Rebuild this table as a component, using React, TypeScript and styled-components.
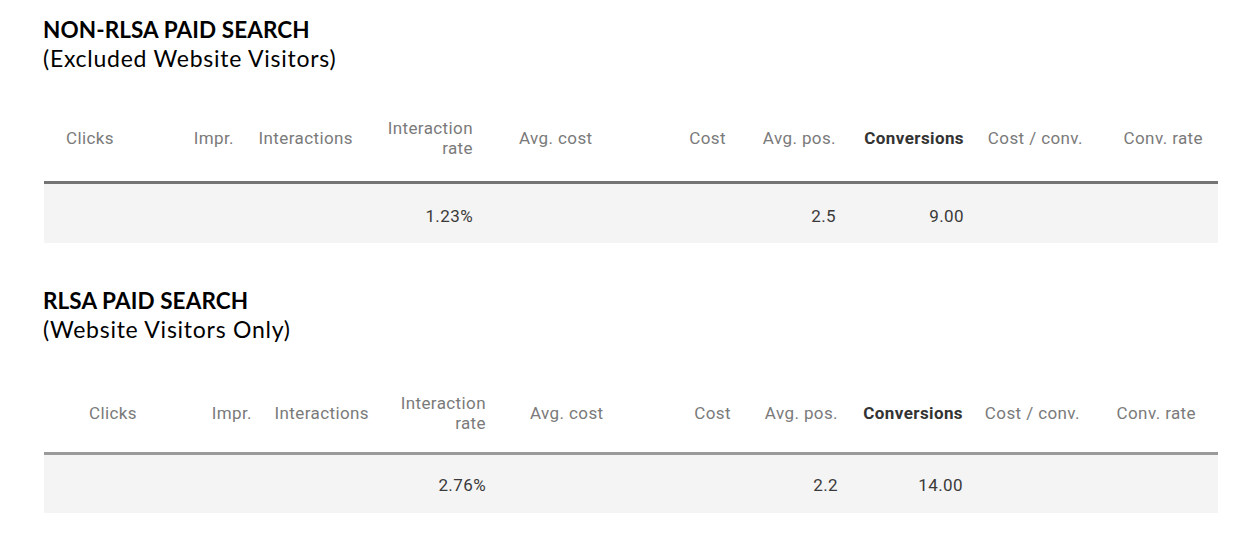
import React from "react";
import styled, { createGlobalStyle } from "styled-components";

const GlobalStyle = createGlobalStyle`
  html, body { margin: 0; padding: 0; background: #ffffff; }
  body { font-family: Roboto, "Liberation Sans", Arial, sans-serif; }
`;

const Page = styled.div`
  width: 1253px;
  box-sizing: border-box;
  padding: 15px 35px 0 43px;
  display: flex;
  flex-direction: column;
`;

const Section = styled.section<{ $gapTop: number; $gapTable: number }>`
  display: flex;
  flex-direction: column;
  margin-top: ${(p) => p.$gapTop}px;
  & > div[data-table] { margin-top: ${(p) => p.$gapTable}px; margin-left: 1px; }
`;

const Title = styled.h2`
  margin: 0;
  font-family: Lato, "Open Sans", "Liberation Sans", sans-serif;
  font-weight: 700;
  font-size: 22.5px;
  line-height: 29px;
  letter-spacing: 0.1px;
  color: #000;
`;

const Subtitle = styled.div`
  font-family: Lato, "Open Sans", "Liberation Sans", sans-serif;
  font-weight: 400;
  font-size: 23px;
  line-height: 29px;
  letter-spacing: 0.75px;
  color: #000;
`;

const Table = styled.div`
  width: 1174px;
  display: flex;
  flex-direction: column;
`;

const HeaderRow = styled.div<{ $cols: string; $height: number; $border: string; $lift: number }>`
  display: grid;
  grid-template-columns: ${(p) => p.$cols};
  height: ${(p) => p.$height}px;
  padding-bottom: ${(p) => p.$lift}px;
  align-items: center;
  border-bottom: ${(p) => p.$border};
`;

const DataRow = styled.div<{ $cols: string; $height: number; $shift: number }>`
  display: grid;
  grid-template-columns: ${(p) => p.$cols};
  height: ${(p) => p.$height}px;
  box-sizing: border-box;
  padding-top: ${(p) => p.$shift}px;
  align-items: center;
  background: #f4f4f4;
`;

const HeadCell = styled.div<{ $align: "left" | "right"; $padL: number; $padR: number; $strong?: boolean }>`
  text-align: ${(p) => p.$align};
  padding-left: ${(p) => p.$padL}px;
  padding-right: ${(p) => p.$padR}px;
  font-size: 17px;
  line-height: 20px;
  letter-spacing: 0.4px;
  white-space: nowrap;
  font-weight: ${(p) => (p.$strong ? 700 : 400)};
  color: ${(p) => (p.$strong ? "#333333" : "#7a7a7a")};
`;

const DataCell = styled.div<{ $padR: number }>`
  text-align: right;
  padding-right: ${(p) => p.$padR}px;
  font-size: 17px;
  line-height: 20px;
  letter-spacing: 0.4px;
  color: #3a3a3a;
  white-space: nowrap;
`;

type Col = {
  label: React.ReactNode;
  w: number;
  align: "left" | "right";
  padL?: number;
  padR?: number;
  strong?: boolean;
  value?: string;
};

type TableSpec = {
  cols: Col[];
  headerHeight: number;
  headerLift: number;
  rowHeight: number;
  rowShift: number;
  border: string;
};

const twoLine = (
  <>
    Interaction
    <br />
    rate
  </>
);

const table1: TableSpec = {
  headerHeight: 86,
  headerLift: 0,
  rowHeight: 59,
  rowShift: 4,
  border: "3px solid #747474",
  cols: [
    { label: "Clicks", w: 136, align: "left", padL: 22 },
    { label: "Impr.", w: 66, align: "right" },
    { label: "Interactions", w: 119, align: "right" },
    { label: twoLine, w: 120, align: "right", value: "1.23%" },
    { label: "Avg. cost", w: 165, align: "left", padL: 34 },
    { label: "Cost", w: 88, align: "right" },
    { label: "Avg. pos.", w: 110, align: "right", value: "2.5" },
    { label: "Conversions", w: 128, align: "right", strong: true, value: "9.00" },
    { label: "Cost / conv.", w: 119, align: "right" },
    { label: "Conv. rate", w: 123, align: "right", padR: 15 },
  ],
};

const table2: TableSpec = {
  headerHeight: 75,
  headerLift: 2,
  rowHeight: 58,
  rowShift: 2,
  border: "3px solid #9a9a9a",
  cols: [
    { label: "Clicks", w: 151, align: "left", padL: 45 },
    { label: "Impr.", w: 69, align: "right" },
    { label: "Interactions", w: 117, align: "right" },
    { label: twoLine, w: 117, align: "right", value: "2.76%" },
    { label: "Avg. cost", w: 162, align: "left", padL: 32 },
    { label: "Cost", w: 83, align: "right" },
    { label: "Avg. pos.", w: 107, align: "right", value: "2.2" },
    { label: "Conversions", w: 125, align: "right", strong: true, value: "14.00" },
    { label: "Cost / conv.", w: 117, align: "right" },
    { label: "Conv. rate", w: 126, align: "right", padR: 22 },
  ],
};

function MetricsTable({ spec }: { spec: TableSpec }) {
  const template = spec.cols.map((c) => `${c.w}px`).join(" ");
  return (
    <Table data-table>
      <HeaderRow
        $cols={template}
        $height={spec.headerHeight}
        $border={spec.border}
        $lift={spec.headerLift}
      >
        {spec.cols.map((c, i) => (
          <HeadCell
            key={i}
            $align={c.align}
            $padL={c.align === "left" ? c.padL ?? 12 : 0}
            $padR={c.align === "right" ? c.padR ?? 12 : 0}
            $strong={c.strong}
          >
            {c.label}
          </HeadCell>
        ))}
      </HeaderRow>
      <DataRow $cols={template} $height={spec.rowHeight} $shift={spec.rowShift}>
        {spec.cols.map((c, i) => (
          <DataCell key={i} $padR={c.padR ?? 12}>
            {c.value ?? ""}
          </DataCell>
        ))}
      </DataRow>
    </Table>
  );
}

export default function App() {
  return (
    <>
      <GlobalStyle />
      <Page>
        <Section $gapTop={0} $gapTable={22}>
          <Title>NON-RLSA PAID SEARCH</Title>
          <Subtitle>(Excluded Website Visitors)</Subtitle>
          <MetricsTable spec={table1} />
        </Section>
        <Section $gapTop={43} $gapTable={31}>
          <Title>RLSA PAID SEARCH</Title>
          <Subtitle>(Website Visitors Only)</Subtitle>
          <MetricsTable spec={table2} />
        </Section>
      </Page>
    </>
  );
}
